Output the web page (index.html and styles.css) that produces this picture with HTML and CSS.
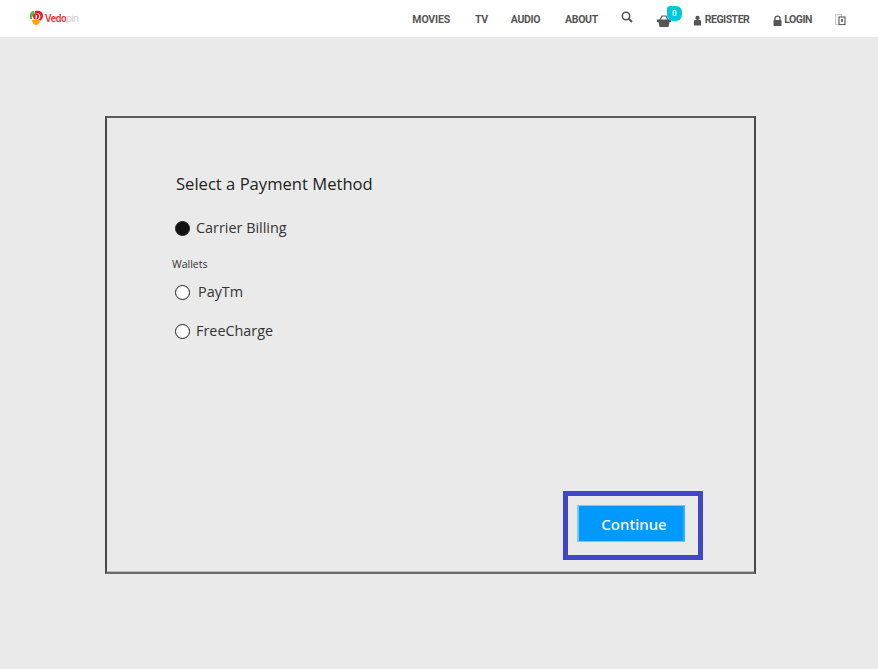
FILE: index.html
```html
<!DOCTYPE html>
<html lang="en">
<head>
<meta charset="utf-8">
<title>Select a Payment Method</title>
<link rel="stylesheet" href="styles.css">
</head>
<body>
<header class="topbar">
  <a class="logo">
    <svg class="logo-mark" width="15" height="16" viewBox="0 0 15 16">
      <path d="M1 6 C1 3 2 1 5 1 L6 5 L3 7 L3 9 L1 9 Z" fill="#4cc04a"/>
      <path d="M6 1 C11 0 14 2 14 6 C14 9 12 10 11 11 L9 10 C11 9 12 7 11 5 C10 3 8 3 6 4 Z" fill="#f01c24"/>
      <path d="M3 10 L11 10 C11 13 9 15 7 15 C5 15 3 13 3 10 Z" fill="#f9a11b"/>
      <circle cx="7" cy="6.5" r="3" fill="#f01c24"/>
      <rect x="6.5" y="5" width="1.4" height="3.5" fill="#fff"/>
    </svg>
    <span class="logo-text"><span class="logo-red">Vedo</span><span class="logo-grey">pin</span></span>
  </a>
  <nav class="nav">
    <a class="nav-link nav-movies">MOVIES</a>
    <a class="nav-link nav-tv">TV</a>
    <a class="nav-link nav-audio">AUDIO</a>
    <a class="nav-link nav-about">ABOUT</a>
    <svg class="nav-search" width="12" height="12" viewBox="0 0 12 12">
      <circle cx="5" cy="5" r="3.7" fill="none" stroke="#555" stroke-width="1.6"/>
      <path d="M7.8 7.8 L11 11" stroke="#555" stroke-width="2"/>
    </svg>
    <span class="cart">
      <svg width="14" height="14" viewBox="0 0 14 14">
        <path d="M3 6 L5 2 H9 L11 6" fill="none" stroke="#555" stroke-width="1.2"/>
        <rect x="0" y="5.5" width="14" height="2.5" fill="#555"/>
        <path d="M1.5 8 H12.5 L11.5 13 H2.5 Z" fill="#555"/>
      </svg>
      <span class="cart-badge">0</span>
    </span>
    <a class="nav-link nav-icon-link nav-register">
      <svg width="9" height="11" viewBox="0 0 10 11">
        <circle cx="5" cy="2.6" r="2.4" fill="#555"/>
        <path d="M1 11 V6.5 Q1 5 3 5 H7 Q9 5 9 6.5 V11 Z" fill="#555"/>
      </svg>
      REGISTER
    </a>
    <a class="nav-link nav-icon-link nav-login">
      <svg width="9" height="11" viewBox="0 0 9 11">
        <path d="M2 5 V3.2 C2 0.4 7 0.4 7 3.2 V5" fill="none" stroke="#555" stroke-width="1.3"/>
        <rect x="0.5" y="5" width="8" height="6" rx="0.8" fill="#555"/>
      </svg>
      LOGIN
    </a>
    <svg class="nav-lang" width="11" height="12" viewBox="0 0 11 12">
      <rect x="0.5" y="0.5" width="6" height="10" fill="#f4f4f4" stroke="#ccc"/>
      <rect x="4" y="3" width="6" height="7.5" fill="#fff" stroke="#666" stroke-width="1.2"/>
      <rect x="6" y="5" width="2" height="3" fill="#777"/>
    </svg>
  </nav>
</header>

<main class="page">
  <section class="card">
    <div class="methods">
      <h1 class="title">Select a Payment Method</h1>
      <label class="option option-carrier"><span class="radio radio-on"></span><span>Carrier Billing</span></label>
      <div class="group-label">Wallets</div>
      <label class="option option-paytm"><span class="radio"></span><span>PayTm</span></label>
      <label class="option option-free"><span class="radio"></span><span>FreeCharge</span></label>
    </div>
    <div class="actions">
      <div class="highlight">
        <button class="continue" type="button">Continue</button>
      </div>
    </div>
  </section>
</main>
</body>
</html>
```
FILE: styles.css
```css
* { box-sizing: border-box; }

html, body {
  margin: 0;
  height: 100%;
}

body {
  background: #eaeaea;
  font-family: "Open Sans", "Noto Sans", sans-serif;
  color: #222;
  overflow: hidden;
}

.topbar {
  height: 37px;
  background: #fff;
  display: flex;
  align-items: center;
  justify-content: space-between;
  padding: 0 32px 0 29px;
}

.logo {
  display: flex;
  align-items: center;
  gap: 1px;
  margin-top: -1px;
}

.logo-text {
  font-family: "Roboto", sans-serif;
  font-size: 10px;
  letter-spacing: -0.4px;
}

.logo-red { color: #ee2a33; font-weight: 500; }
.logo-grey { color: #bdbdbd; font-weight: 300; }

.nav {
  display: flex;
  align-items: center;
  margin-top: 3px;
}

.nav-link {
  font-family: "Roboto", "Liberation Sans", sans-serif;
  font-size: 10.5px;
  font-weight: 700;
  color: #555;
  white-space: nowrap;
  line-height: 12px;
  letter-spacing: -0.35px;
}

.nav-movies { letter-spacing: -0.15px; }
.nav-register { letter-spacing: -0.5px; }
.nav-login { letter-spacing: -0.5px; }

.nav-tv { margin-left: 25px; }
.nav-audio { margin-left: 23px; }
.nav-about { margin-left: 25px; }

.nav-search { margin-left: 23px; margin-top: -6px; }

.cart {
  position: relative;
  display: flex;
  margin-left: 24px;
  margin-top: 1px;
}

.cart-badge {
  position: absolute;
  top: -8px;
  left: 10px;
  width: 15px;
  height: 15px;
  border-radius: 3px 6px 6px 6px;
  background: #00c8dc;
  color: #fff;
  font-size: 8px;
  line-height: 14px;
  text-align: center;
  font-weight: 600;
}

.nav-icon-link {
  display: flex;
  align-items: center;
  gap: 2px;
}

.nav-register { margin-left: 22px; gap: 3px; }
.nav-login { margin-left: 24px; }
.nav-lang { margin-left: 23px; }

.page {
  padding: 79px 122px 0 105px;
}

.card {
  height: 458px;
  border: 2px solid #5c5c5c;
  border-bottom-color: #6a6a6a;
  border-left-color: #4a4a4a;
  border-right-color: #4a4a4a;
  box-shadow: inset 0 -1px 0 #bcbcbc;
  display: flex;
  flex-direction: column;
  justify-content: space-between;
  padding: 54px 51px 12px 66px;
}

.methods {
  display: flex;
  flex-direction: column;
  align-items: flex-start;
}

.title {
  margin: 0 0 0 3px;
  font-size: 16.6px;
  line-height: 24px;
  font-weight: 400;
  color: #222;
}

.option {
  display: flex;
  align-items: center;
  font-size: 14.4px;
  line-height: 22px;
  color: #333;
}

.option-carrier { margin: 21px 0 0 2px; gap: 6px; }
.option-paytm { margin: 10px 0 0 2px; gap: 8px; }
.option-free { margin: 17px 0 0 2px; gap: 6px; }

.group-label {
  margin: 18px 0 0 -1px;
  font-size: 10.5px;
  line-height: 14px;
  color: #333;
}

.radio {
  width: 15px;
  height: 15px;
  border: 1.5px solid #222;
  border-radius: 50%;
  background: #fff;
  flex: none;
}

.radio-on {
  background: #111;
}

.actions {
  display: flex;
  justify-content: flex-end;
}

.highlight {
  width: 140px;
  height: 69px;
  border: 5px solid #4046c8;
  padding: 9px 13px 0 9px;
}

.continue {
  display: block;
  width: 108px;
  height: 37px;
  padding: 0 0 0 6px;
  border-style: solid;
  border-width: 1px 2px;
  border-color: #7cc8f4 #33adfb #7cc8f4 #7cc8f4;
  background: #0099ff;
  color: #fff;
  font-family: "Noto Sans", "Open Sans", sans-serif;
  font-size: 15px;
  font-weight: 500;
}
```
